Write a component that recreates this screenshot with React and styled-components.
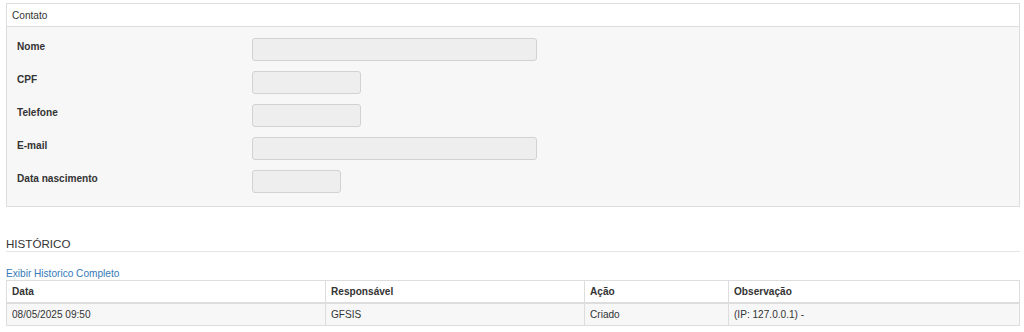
import React from "react";
import styled, { createGlobalStyle } from "styled-components";

const GlobalStyle = createGlobalStyle`
  body {
    margin: 0;
    background: #fff;
    font-family: "Liberation Sans", Arial, sans-serif;
    font-size: 10.1px;
    color: #333;
  }
`;

const St = {
  Page: styled.div`
    padding: 3px 4px 0 6px;
  `,
  Panel: styled.section`
    border: 1px solid #dddddd;
    background-color: #f7f7f7;
  `,
  PanelHeader: styled.div`
    height: 21px;
    line-height: 21px;
    padding: 1px 5px 0 5px;
    background-color: #fff;
    border-bottom: 1px solid #dddddd;
    color: #333;
  `,
  PanelBody: styled.div`
    display: flex;
    flex-direction: column;
    gap: 10px;
    padding: 11px 10px 13px 10px;
  `,
  FormRow: styled.div`
    display: grid;
    grid-template-columns: 235px auto;
    align-items: start;
  `,
  Label: styled.label`
    line-height: 18px;
    font-weight: 700;
    color: #333;
  `,
  Input: styled.input`
    box-sizing: border-box;
    width: ${({ width }) => width}px;
    height: 23px;
    margin: 0;
    border: 1px solid #d2d2d2;
    border-radius: 3px;
    background-color: #eeeeee;
  `,
  SectionTitle: styled.h4`
    margin: 28px 0 0 0;
    padding: 2px 0 0 0;
    font-size: 11.6px;
    font-weight: 400;
    line-height: 14px;
    color: #333;
    border-bottom: 1px solid #e5e5e5;
  `,
  Link: styled.a`
    display: block;
    margin-top: 15px;
    line-height: 13px;
    color: #337ab7;
    text-decoration: none;
  `,
  Table: styled.table`
    width: 100%;
    border-collapse: collapse;
    table-layout: fixed;
    border: 1px solid #dddddd;
  `,
  Th: styled.th`
    box-sizing: border-box;
    width: ${({ width }) => (width ? `${width}px` : "auto")};
    height: 22px;
    padding: 0 5px;
    text-align: left;
    font-weight: 700;
    background-color: #fff;
    border: 1px solid #dddddd;
    border-bottom-width: 2px;
  `,
  Td: styled.td`
    height: 21px;
    padding: 0 5px;
    background-color: #f7f7f7;
    border: 1px solid #dddddd;
  `,
};

const fields = [
  { label: "Nome", width: 285 },
  { label: "CPF", width: 109 },
  { label: "Telefone", width: 109 },
  { label: "E-mail", width: 285 },
  { label: "Data nascimento", width: 89 },
];

const columns = [
  { title: "Data", width: 319 },
  { title: "Responsável", width: 259 },
  { title: "Ação", width: 144 },
  { title: "Observação" },
];

const rows = [["08/05/2025 09:50", "GFSIS", "Criado", "(IP: 127.0.0.1) -"]];

const App = () => {
  return (
    <St.Page>
      <GlobalStyle />
      <St.Panel>
        <St.PanelHeader>Contato</St.PanelHeader>
        <St.PanelBody>
          {fields.map((field) => (
            <St.FormRow key={`field-${field.label}`}>
              <St.Label>{field.label}</St.Label>
              <St.Input width={field.width} disabled />
            </St.FormRow>
          ))}
        </St.PanelBody>
      </St.Panel>

      <St.SectionTitle>HISTÓRICO</St.SectionTitle>
      <St.Link href="#">Exibir Historico Completo</St.Link>
      <St.Table>
        <thead>
          <tr>
            {columns.map((col) => (
              <St.Th key={`col-${col.title}`} width={col.width}>
                {col.title}
              </St.Th>
            ))}
          </tr>
        </thead>
        <tbody>
          {rows.map((row, i) => (
            <tr key={`row-${i}`}>
              {row.map((cell, j) => (
                <St.Td key={`cell-${i}-${j}`}>{cell}</St.Td>
              ))}
            </tr>
          ))}
        </tbody>
      </St.Table>
    </St.Page>
  );
};

export default App;
